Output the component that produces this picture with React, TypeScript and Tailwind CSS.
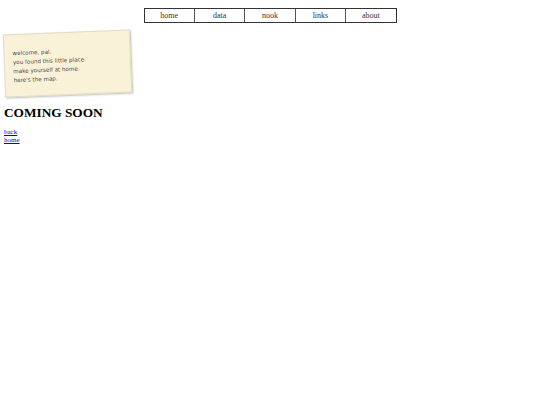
const navItems = ['home', 'data', 'nook', 'links', 'about'];

export default function App() {
  return (
    <div className="min-h-[405px] bg-white font-['Liberation_Serif',serif] text-black">
      {/* Top nav */}
      <nav className="pt-2">
        <ul className="mx-auto flex w-[253px] border border-[#333]">
          {navItems.map((item, i) => (
            <li
              key={item}
              className={`flex h-[13px] flex-1 items-center justify-center text-[8px] leading-none text-[#333] ${
                i > 0 ? 'border-l border-[#555]' : ''
              }`}
            >
              {item}
            </li>
          ))}
        </ul>
      </nav>

      {/* Note card */}
      <div className="mt-[9px] pl-[4px]">
        <div className="h-[63px] w-[127px] -rotate-[2.3deg] border border-[#e4dcc4] bg-[#faf1d9] px-[8px] pt-[14px] font-['DejaVu_Sans',sans-serif] text-[5.6px] leading-[9px] text-[#4a4a4a] shadow-[1px_1px_2px_rgba(0,0,0,0.25)]">
          <p>welcome, pal.</p>
          <p>you found this little place.</p>
          <p>make yourself at home.</p>
          <p>here's the map.</p>
        </div>
      </div>

      {/* Main */}
      <main className="pl-[4px] pt-[11px]">
        <h1 className="text-[13.3px] font-bold leading-none">COMING SOON</h1>
        <div className="mt-[9px] flex flex-col text-[7px] leading-[8px]">
          <a href="#" className="text-[#00e] underline">back</a>
          <a href="#" className="text-[#00e] underline">home</a>
        </div>
      </main>
    </div>
  );
}
